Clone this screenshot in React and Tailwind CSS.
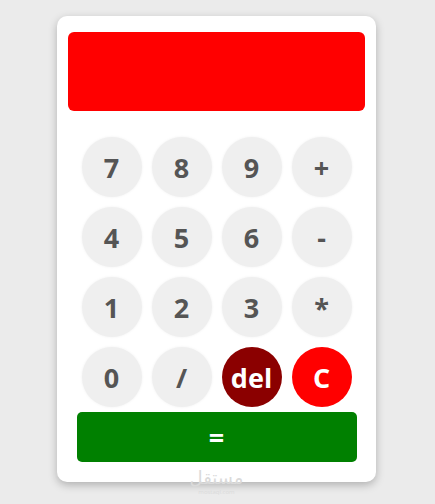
const KEYS = ['7', '8', '9', '+', '4', '5', '6', '-', '1', '2', '3', '*', '0', '/'];

function Key({ label, className = '' }) {
  return (
    <button
      className={`m-[5px] w-[60px] h-[60px] rounded-full flex items-center justify-center text-[27px] font-bold leading-none ${className}`}
    >
      {label}
    </button>
  );
}

export default function App() {
  return (
    <div
      className="w-[435px] h-[504px] bg-[#ebebeb] pt-[16px] pl-[57px] overflow-hidden"
      style={{ fontFamily: '"Open Sans", "Noto Sans", sans-serif' }}
    >
      <div className="relative w-[319px] h-[466px] bg-white rounded-[10px] shadow-[0_3px_8px_rgba(0,0,0,0.25)] pt-[16px] px-[11px]">
        {/* display */}
        <div className="h-[79px] bg-[#ff0000] rounded-[6px]" />

        <div className="w-[280px] mx-auto mt-[21px] flex flex-wrap">
          {KEYS.map((k) => (
            <Key key={k} label={k} className="bg-[#efefef] text-[#555555] shadow-[0_0_3px_#f0f0f0]" />
          ))}
          <Key label="del" className="bg-[#8b0000] text-white" />
          <Key label="C" className="bg-[#ff0000] text-white" />
        </div>

        <button className="block w-[280px] h-[50px] mx-auto bg-[#008000] rounded-[5px] text-white text-[27px] font-bold leading-none">
          =
        </button>

        {/* faint site mark along the bottom edge */}
        <div className="absolute left-0 right-0 top-[452px] flex flex-col items-center text-[#dadada] leading-none">
          <span className="text-[18px] leading-[18px]" style={{ fontFamily: '"Noto Sans", "DejaVu Sans", sans-serif' }}>مستقل</span>
          <span className="text-[6px] leading-[6px] mt-[3px]">mostaql.com</span>
        </div>
      </div>
    </div>
  );
}
